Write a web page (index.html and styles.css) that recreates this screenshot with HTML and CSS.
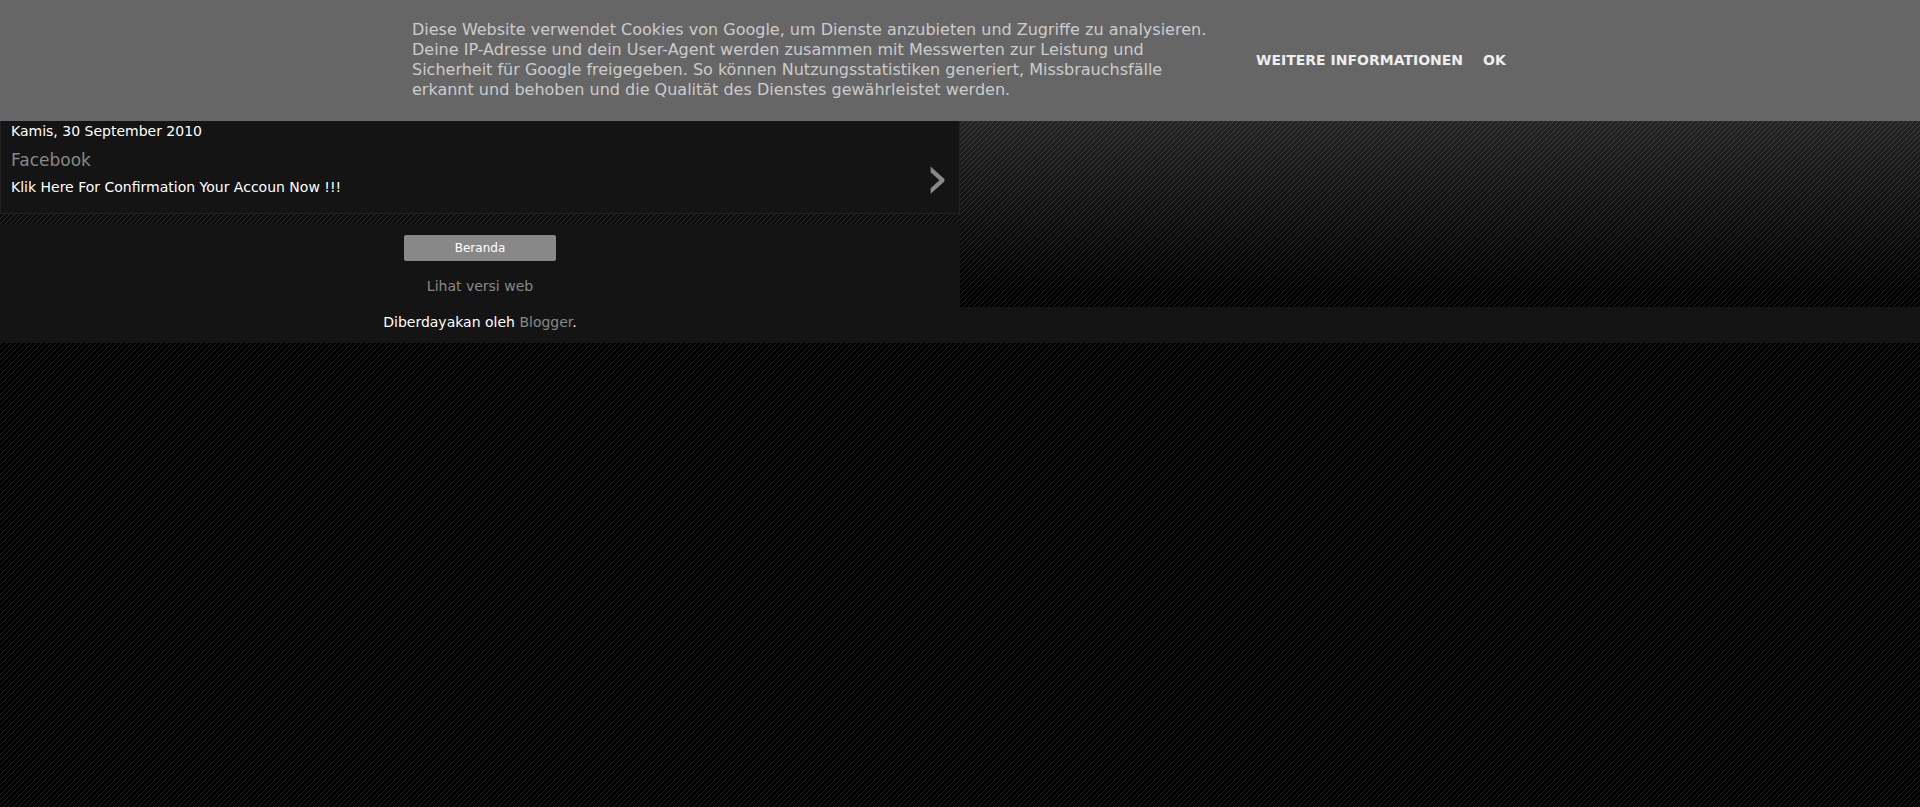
FILE: index.html
```html
<!DOCTYPE html>
<html lang="id">
<head>
<meta charset="utf-8">
<title>Facebook</title>
<link rel="stylesheet" href="styles.css">
</head>
<body>
<aside class="cookie-bar">
  <div class="cookie-inner">
    <p class="cookie-text">Diese Website verwendet Cookies von Google, um Dienste anzubieten und Zugriffe zu analysieren. Deine IP-Adresse und dein User-Agent werden zusammen mit Messwerten zur Leistung und Sicherheit für Google freigegeben. So können Nutzungsstatistiken generiert, Missbrauchsfälle erkannt und behoben und die Qualität des Dienstes gewährleistet werden.</p>
    <nav class="cookie-actions">
      <a href="#info">WEITERE INFORMATIONEN</a>
      <a href="#ok">OK</a>
    </nav>
  </div>
</aside>
<div class="page">
  <main class="content">
    <article class="post">
      <div class="post-body">
        <h2 class="date">Kamis, 30 September 2010</h2>
        <h3 class="title"><a href="#post">Facebook</a></h3>
        <p class="snippet">Klik Here For Confirmation Your Accoun Now !!!</p>
      </div>
      <div class="arrow" aria-hidden="true">›</div>
    </article>
    <div class="divider"></div>
    <div class="pager">
      <a class="home" href="#home">Beranda</a>
      <a class="web" href="#web">Lihat versi web</a>
    </div>
  </main>
  <footer class="footer">
    <p class="credit">Diberdayakan oleh <a href="#blogger">Blogger</a>.</p>
  </footer>
</div>
</body>
</html>
```
FILE: styles.css
```css
body {
  --stripes: url("data:image/svg+xml,%3Csvg xmlns='http://www.w3.org/2000/svg' width='5' height='5' fill='%23fff' fill-opacity='.13' shape-rendering='crispEdges'%3E%3Crect x='4' width='1' height='1'/%3E%3Crect x='3' y='1' width='1' height='1'/%3E%3Crect x='2' y='2' width='1' height='1'/%3E%3Crect x='1' y='3' width='1' height='1'/%3E%3Crect y='4' width='1' height='1'/%3E%3C/svg%3E");
  margin: 0;
  min-height: 100vh;
  background: var(--stripes) #000;
  color: #fff;
  font: 14px/18px "DejaVu Sans", sans-serif;
}
h2, h3, p { margin: 0; font-weight: normal; }
a { color: #888; text-decoration: none; }
.cookie-bar { background: #666; padding: 20px 0 21px; }
.cookie-inner {
  display: flex;
  justify-content: center;
  align-items: center;
  gap: 44px;
}
.cookie-text { width: 800px; color: #ccc; font-size: 16px; line-height: 20px; }
.cookie-actions { display: flex; gap: 20px; min-width: 252px; }
.cookie-actions a { color: #eee; font-weight: bold; }
.page { background: linear-gradient(rgb(255 255 255 / .14), transparent 170px); }
.content { width: 50%; background: #141414; }
.post {
  display: flex;
  justify-content: space-between;
  padding: 1px 10px 17px;
  border: 1px solid #222;
  border-top: 0;
}
.date { font-size: 14px; }
.title { margin: 8px 0 6px; font-size: 17px; line-height: 24px; }
.arrow { align-self: flex-end; color: #888; font-size: 60px; line-height: 38px; }
.divider { height: 10px; background: var(--stripes) #0d0d0d; }
.pager {
  display: flex;
  flex-direction: column;
  align-items: center;
  gap: 16px;
  padding: 11px 0 12px;
}
.home {
  width: 152px;
  border-radius: 2px;
  background: #888;
  color: #fff;
  font-size: 12px;
  line-height: 26px;
  text-align: center;
}
.footer { background: #141414; padding: 6px 0 12px; }
.credit { width: 50%; text-align: center; }
```
